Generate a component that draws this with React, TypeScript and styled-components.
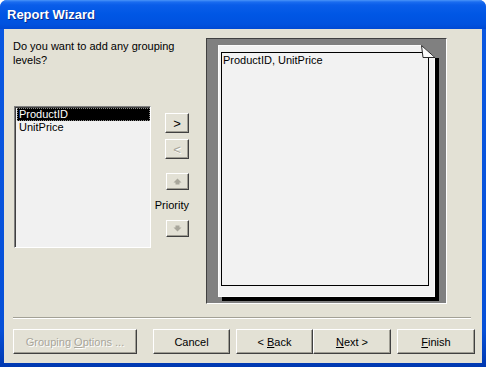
import React from "react";
import styled, { createGlobalStyle } from "styled-components";

const Global = createGlobalStyle`
  html, body { margin: 0; padding: 0; background: #ffffff; }
  body { font-family: "Liberation Sans", Arial, sans-serif; }
`;

const FACE = "#e3e1d5";

const Window = styled.div`
  width: 486px;
  height: 367px;
  display: flex;
  flex-direction: column;
  background: linear-gradient(to bottom, #0a58e2 0%, #0650d8 90%, #0038b0 100%);
  border-radius: 7px 7px 0 0;
  overflow: hidden;
  box-sizing: border-box;
`;

const TitleBar = styled.div`
  height: 29px;
  flex: none;
  display: flex;
  align-items: center;
  padding-left: 7px;
  background: linear-gradient(
    to bottom,
    #4a94f8 0px,
    #1a6cf0 2px,
    #0a5de9 5px,
    #0057e5 14px,
    #0052df 24px,
    #0049d4 29px
  );
  color: #ffffff;
  font-weight: bold;
  font-size: 13px;
  text-shadow: 1px 1px 0 #0b2a8a;
`;

const Body = styled.div`
  flex: 1;
  margin: 0 4px 4px;
  background: ${FACE};
  display: flex;
  flex-direction: column;
  padding-bottom: 9px;
`;

const Main = styled.div`
  height: 275px;
  box-sizing: border-box;
  padding: 9px 0 0 9px;
  display: flex;
`;

const LeftColumn = styled.div`
  width: 180px;
  display: flex;
  flex-direction: column;
`;

const Prompt = styled.div`
  margin-top: 1px;
  font-size: 11px;
  line-height: 14px;
  color: #000;
`;

const ListRow = styled.div`
  margin-top: 39px;
  display: flex;
  align-items: flex-start;
`;

const ListBox = styled.div`
  width: 137px;
  height: 142px;
  box-sizing: border-box;
  margin-left: 1px;
  background: #f1f1f1;
  border: 1px solid;
  border-color: #808080 #ffffff #ffffff #808080;
  box-shadow: inset 1px 1px 0 #404040;
  padding: 1px 0 0 2px;
`;

const ListItem = styled.div<{ $selected?: boolean }>`
  height: 13px;
  line-height: 13px;
  font-size: 11px;
  padding-left: 2px;
  background: ${(p) => (p.$selected ? "#000000" : "transparent")};
  color: ${(p) => (p.$selected ? "#ffffff" : "#000000")};
  outline: ${(p) => (p.$selected ? "1px dotted #8a8a8a" : "none")};
  outline-offset: -1px;
`;

const SideColumn = styled.div`
  width: 33px;
  margin-left: 5px;
  padding-top: 7px;
  display: flex;
  flex-direction: column;
  align-items: flex-end;
`;

const Btn = styled.button<{ $w: number; $h?: number; $mt?: number }>`
  width: ${(p) => p.$w}px;
  height: ${(p) => p.$h ?? 25}px;
  margin-top: ${(p) => p.$mt ?? 0}px;
  flex: none;
  box-sizing: border-box;
  background: ${FACE};
  border: 1px solid;
  border-color: #ffffff #404040 #404040 #ffffff;
  box-shadow: inset -1px -1px 0 #a09e94;
  font-family: "Liberation Sans", Arial, sans-serif;
  font-size: 11px;
  color: ${(p) => (p.disabled ? "#a8a69b" : "#000000")};
  text-shadow: ${(p) => (p.disabled ? "1px 1px 0 #ffffff" : "none")};
  padding: 0;
  display: flex;
  align-items: center;
  justify-content: center;
  cursor: default;
`;

const Label = styled.span`
  white-space: pre;
`;

const ArrowGlyph = styled.span`
  font-size: 13px;
  line-height: 13px;
`;

const PriorityLabel = styled.div`
  margin-top: 8px;
  font-size: 11px;
  line-height: 14px;
  color: #000;
`;

const Preview = styled.div`
  width: 241px;
  height: 266px;
  margin-left: 13px;
  box-sizing: border-box;
  border: 1px solid;
  border-color: #404040 #ffffff #ffffff #404040;
  background: #808080;
  padding: 6px 0 0 11px;
`;

const Page = styled.div`
  position: relative;
  width: 217px;
  height: 252px;
  box-sizing: border-box;
  background: #f2f2f2;
  border: 1px solid #fbfbfb;
  box-shadow: 4px 4px 0 #000000;
  padding: 6px 0 0 2px;
`;

const DogEar = styled.svg`
  position: absolute;
  top: -1px;
  right: -5px;
`;

const InnerRect = styled.div`
  width: 208px;
  height: 234px;
  box-sizing: border-box;
  border: 1px solid #000000;
  padding: 1px 0 0 1px;
  font-size: 11px;
  line-height: 13px;
  color: #000;
`;

const Separator = styled.div`
  margin: 13px 11px 0 9px;
  border-top: 1px solid #a3a196;
  border-bottom: 1px solid #ffffff;
`;

const Footer = styled.div`
  margin-top: 10px;
  padding-left: 9px;
  display: flex;
  gap: 6px;
`;

const Pair = styled.div`
  display: flex;
`;

const Spacer = styled.div<{ $w: number }>`
  width: ${(p) => p.$w}px;
`;

const UpArrow = () => (
  <svg width="9" height="7" viewBox="0 0 9 7">
    <polygon points="4.5,0.5 8.5,4.5 6.5,4.5 6.5,6.5 2.5,6.5 2.5,4.5 0.5,4.5" fill="#a8a69b" />
  </svg>
);

const DownArrow = () => (
  <svg width="9" height="7" viewBox="0 0 9 7">
    <polygon points="4.5,6.5 8.5,2.5 6.5,2.5 6.5,0.5 2.5,0.5 2.5,2.5 0.5,2.5" fill="#a8a69b" />
  </svg>
);

export default function App() {
  return (
    <>
      <Global />
      <Window>
        <TitleBar>Report Wizard</TitleBar>
        <Body>
          <Main>
            <LeftColumn>
              <Prompt>Do you want to add any grouping levels?</Prompt>
              <ListRow>
                <ListBox>
                  <ListItem $selected>ProductID</ListItem>
                  <ListItem>UnitPrice</ListItem>
                </ListBox>
                <SideColumn>
                  <Btn $w={24} $h={20}>
                    <ArrowGlyph>&gt;</ArrowGlyph>
                  </Btn>
                  <Btn $w={24} $h={20} $mt={6} disabled>
                    <ArrowGlyph>&lt;</ArrowGlyph>
                  </Btn>
                  <Btn $w={23} $h={17} $mt={14} disabled>
                    <UpArrow />
                  </Btn>
                  <PriorityLabel>Priority</PriorityLabel>
                  <Btn $w={23} $h={17} $mt={8} disabled>
                    <DownArrow />
                  </Btn>
                </SideColumn>
              </ListRow>
            </LeftColumn>
            <Preview>
              <Page>
                <DogEar width="18" height="13" viewBox="0 0 18 13">
                  <polygon points="0,0 18,0 18,13 14,13 14,12" fill="#808080" />
                  <polygon points="0.5,0.5 2,12.5 14,12.5" fill="#fbfbfb" stroke="#2a2a2a" strokeWidth="1" />
                </DogEar>
                <InnerRect>ProductID, UnitPrice</InnerRect>
              </Page>
            </Preview>
          </Main>
          <Separator />
          <Footer>
            <Btn $w={124} disabled>
              <Label>
                Grouping <u>O</u>ptions ...
              </Label>
            </Btn>
            <Spacer $w={4} />
            <Btn $w={77}>
              <Label>Cancel</Label>
            </Btn>
            <Pair>
              <Btn $w={77}>
                <Label>
                  &lt; <u>B</u>ack
                </Label>
              </Btn>
              <Btn $w={78}>
                <Label>
                  <u>N</u>ext &gt;
                </Label>
              </Btn>
            </Pair>
            <Btn $w={78}>
              <Label>
                <u>F</u>inish
              </Label>
            </Btn>
          </Footer>
        </Body>
      </Window>
    </>
  );
}
